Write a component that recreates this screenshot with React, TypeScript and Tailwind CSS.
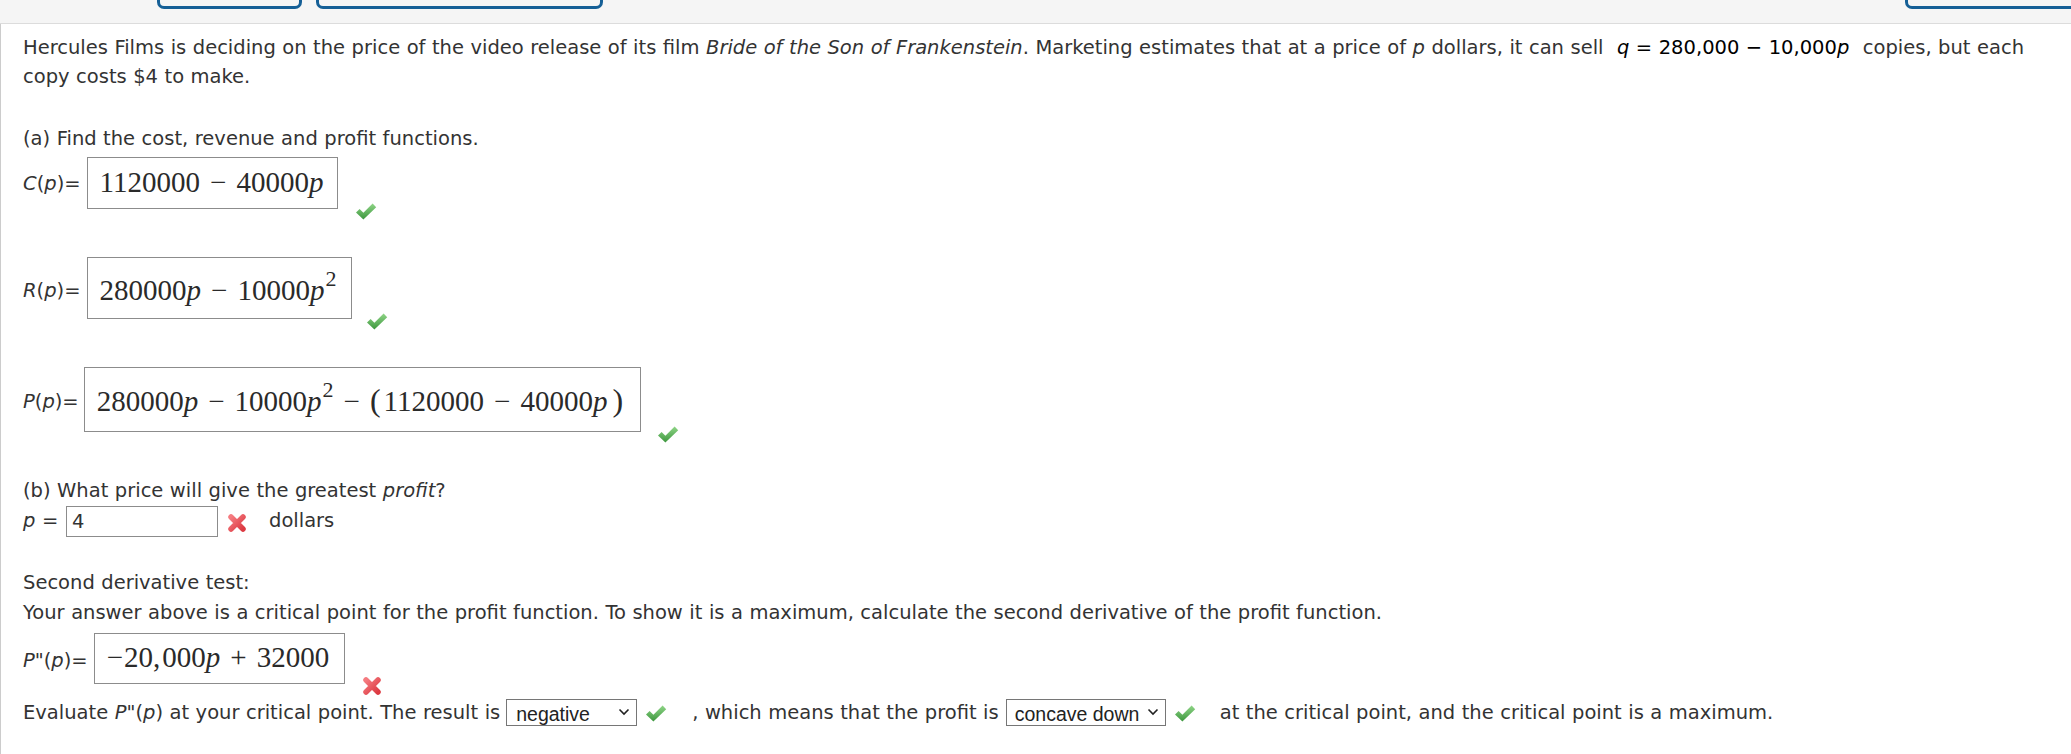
import React from 'react';

function Check({ className }: { className?: string }) {
  return (
    <svg className={className} width="22" height="18" viewBox="0 0 22 18">
      <defs>
        <linearGradient id="okGrad" x1="0" y1="0" x2="0" y2="1">
          <stop offset="0" stopColor="#8fd587" />
          <stop offset="1" stopColor="#3c963d" />
        </linearGradient>
      </defs>
      <path d="M1 10.5 L4.6 7 L8.4 10.8 L17.6 1.6 L21.2 5.2 L8.4 17.6 Z" fill="url(#okGrad)" />
    </svg>
  );
}

function Cross({ className }: { className?: string }) {
  return (
    <svg className={className} width="20" height="20" viewBox="0 0 20 20">
      <defs>
        <linearGradient id="badGrad" x1="0" y1="0" x2="1" y2="1">
          <stop offset="0" stopColor="#f57b80" />
          <stop offset="1" stopColor="#dc3a42" />
        </linearGradient>
      </defs>
      <path d="M4 4 L16 16 M16 4 L4 16" stroke="url(#badGrad)" strokeWidth="5.5" strokeLinecap="round" fill="none" />
    </svg>
  );
}

const Minus = () => <span className="mx-[10px]">−</span>;
const Plus = () => <span className="mx-[10px]">+</span>;
const Pv = () => <span className="italic">p</span>;
const Sq = () => <span className="text-[22px] leading-[0] align-[14px] ml-[1px]">2</span>;

function Chevron() {
  return (
    <svg className="absolute right-[7px] top-[9px] pointer-events-none" width="12" height="8" viewBox="0 0 12 8">
      <path d="M1.5 1.5 L6 6 L10.5 1.5" stroke="#222" strokeWidth="1.6" fill="none" />
    </svg>
  );
}

export default function App() {
  const serif = "font-['Liberation_Serif',serif] text-[29px] leading-[32px] text-[#2a2a2a] border border-[#8c8c8c] pl-[12px] whitespace-nowrap";

  return (
    <div className="min-h-screen bg-white font-['DejaVu_Sans',sans-serif] text-[19.5px] text-[#333] [word-spacing:0.3px]">
      <div className="h-[24px] bg-[#f5f5f5] border-b border-[#dcdcdc] flex items-start">
        <div className="ml-[157px] w-[145px] h-[9px] border-x-[3px] border-b-[3px] border-[#155f96] rounded-b-[7px]" />
        <div className="ml-[14px] w-[287px] h-[9px] border-x-[3px] border-b-[3px] border-[#155f96] rounded-b-[7px]" />
        <div className="ml-auto w-[166px] h-[9px] border-l-[3px] border-b-[3px] border-[#155f96] rounded-bl-[7px]" />
      </div>

      <div className="border-l border-[#cccccc] pl-[22px] pt-[9px] pb-[30px]">
        <p className="leading-[29px] whitespace-nowrap">
          Hercules Films is deciding on the price of the video release of its film <i>Bride of the Son of Frankenstein</i>. Marketing estimates that at a price of <i>p</i> dollars, it can sell{' '}
          <span className="text-black mx-[7px]"><i>q</i> = 280,000 − 10,000<i>p</i></span>{' '}
          copies, but each
          <br />
          copy costs $4 to make.
        </p>

        <p className="mt-[33px] leading-[29px]">(a) Find the cost, revenue and profit functions.</p>

        <div className="flex items-start mt-[4px]">
          <div className="mt-[12px] leading-[29px] whitespace-nowrap"><i>C</i>(<i>p</i>)=</div>
          <div className={`${serif} ml-[6px] w-[251px] h-[52px] pt-[8px]`}>
            1120000<Minus />40000<Pv />
          </div>
          <Check className="ml-[17px] mt-[45px]" />
        </div>

        <div className="flex items-start mt-[37px]">
          <div className="mt-[19px] leading-[29px] whitespace-nowrap"><i>R</i>(<i>p</i>)=</div>
          <div className={`${serif} ml-[6px] w-[265px] h-[62px] pt-[16px]`}>
            280000<Pv /><Minus />10000<Pv /><Sq />
          </div>
          <Check className="ml-[14px] mt-[55px]" />
        </div>

        <div className="flex items-start mt-[37px]">
          <div className="mt-[20px] leading-[29px] whitespace-nowrap"><i>P</i>(<i>p</i>)=</div>
          <div className={`${serif} ml-[5px] w-[557px] h-[65px] pt-[17px]`}>
            280000<Pv /><Minus />10000<Pv /><Sq /><Minus />
            <span className="text-[32px] leading-[0]">(</span>
            <span className="ml-[3px]">1120000</span><Minus />40000<Pv />
            <span className="text-[32px] leading-[0] ml-[5px]">)</span>
          </div>
          <Check className="ml-[16px] mt-[58px]" />
        </div>

        <p className="mt-[33px] leading-[29px]">(b) What price will give the greatest <i>profit</i>?</p>

        <div className="flex items-start mt-[1px]">
          <div className="w-[43px] leading-[29px] whitespace-pre"><i>p</i> =</div>
          <input
            readOnly
            value="4"
            className="w-[152px] h-[31px] border border-[#8c8c8c] pl-[5px] text-[19.5px] text-[#333] outline-none bg-white"
          />
          <Cross className="ml-[9px] mt-[7px]" />
          <div className="ml-[22px] leading-[29px]">dollars</div>
        </div>

        <p className="mt-[31px] leading-[30px]">Second derivative test:</p>
        <p className="leading-[30px]">
          Your answer above is a critical point for the profit function. To show it is a maximum, calculate the second derivative of the profit function.
        </p>

        <div className="flex items-start mt-[5px]">
          <div className="mt-[13px] leading-[29px] whitespace-nowrap"><i>P</i>"(<i>p</i>)=</div>
          <div className={`${serif} ml-[6px] w-[251px] h-[51px] pt-[7px]`}>
            <span className="mr-[1px]">−</span>20<span className="mr-[2px]">,</span>000<Pv /><Plus />32000
          </div>
          <Cross className="ml-[17px] mt-[43px]" />
        </div>

        <div className="flex items-center h-[29px] mt-[2px] whitespace-nowrap">
          <span>Evaluate <i>P</i>"(<i>p</i>) at your critical point. The result is</span>
          <div className="relative ml-[6px] w-[131px] h-[27px]">
            <select
              defaultValue="negative"
              className="appearance-none w-full h-full border border-[#767676] rounded-none bg-white pl-[9px] font-['Liberation_Sans',sans-serif] text-[19.5px] text-[#222] outline-none"
            >
              <option>?</option>
              <option>positive</option>
              <option>negative</option>
              <option>zero</option>
            </select>
            <Chevron />
          </div>
          <Check className="ml-[8px]" />
          <span className="ml-[25px]">, which means that the profit is</span>
          <div className="relative ml-[7px] w-[160px] h-[27px]">
            <select
              defaultValue="concave down"
              className="appearance-none w-full h-full border border-[#767676] rounded-none bg-white pl-[8px] font-['Liberation_Sans',sans-serif] text-[19.5px] text-[#222] outline-none"
            >
              <option>?</option>
              <option>concave up</option>
              <option>concave down</option>
            </select>
            <Chevron />
          </div>
          <Check className="ml-[8px]" />
          <span className="ml-[24px]">at the critical point, and the critical point is a maximum.</span>
        </div>
      </div>
    </div>
  );
}
